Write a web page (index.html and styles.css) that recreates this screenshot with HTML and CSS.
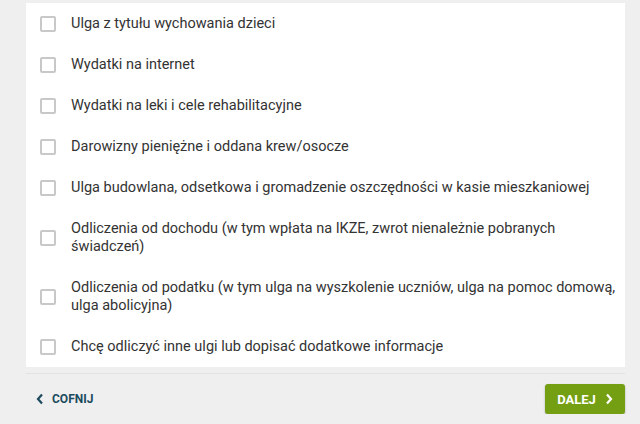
FILE: index.html
```html
<!DOCTYPE html>
<html lang="pl">
<head>
  <meta charset="UTF-8" />
  <meta name="viewport" content="width=device-width, initial-scale=1.0"/>
  <title>Ulgi i odliczenia</title>
  <link rel="stylesheet" href="styles.css">
</head>
<body>
  <div class="panel">
    <label class="option"><span class="box"></span><span class="text">Ulga z tytułu wychowania dzieci</span></label>
    <label class="option"><span class="box"></span><span class="text">Wydatki na internet</span></label>
    <label class="option"><span class="box"></span><span class="text">Wydatki na leki i cele rehabilitacyjne</span></label>
    <label class="option"><span class="box"></span><span class="text">Darowizny pieniężne i oddana krew/osocze</span></label>
    <label class="option"><span class="box"></span><span class="text">Ulga budowlana, odsetkowa i gromadzenie oszczędności w kasie mieszkaniowej</span></label>
    <label class="option"><span class="box"></span><span class="text">Odliczenia od dochodu (w tym wpłata na IKZE, zwrot nienależnie pobranych świadczeń)</span></label>
    <label class="option"><span class="box"></span><span class="text">Odliczenia od podatku (w tym ulga na wyszkolenie uczniów, ulga na pomoc domową, ulga abolicyjna)</span></label>
    <label class="option"><span class="box"></span><span class="text">Chcę odliczyć inne ulgi lub dopisać dodatkowe informacje</span></label>
  </div>

  <div class="nav">
    <a class="back" href="#">
      <svg width="8" height="12" viewBox="0 0 8 12"><path d="M6 1.5 L2 6 L6 10.5" fill="none" stroke="currentColor" stroke-width="2.2"/></svg>
      COFNIJ
    </a>
    <button class="next">
      DALEJ
      <svg width="8" height="12" viewBox="0 0 8 12"><path d="M2 1.5 L6 6 L2 10.5" fill="none" stroke="currentColor" stroke-width="2.2"/></svg>
    </button>
  </div>
</body>
</html>
```

FILE: styles.css
```css
body {
  background-color: #efefef;
  color: #333;
  font-family: Roboto, 'Liberation Sans', sans-serif;
  margin: 0;
  padding: 3px 15px 0 26px;
}
.panel {
  background-color: #fff;
  padding: 0 6px 0 14px;
}
.option {
  display: flex;
  align-items: center;
  gap: 15px;
  padding: 11.5px 0;
  font-size: 14.5px;
  line-height: 18px;
  cursor: pointer;
}
.box {
  flex: none;
  width: 12px;
  height: 12px;
  border: 2px solid #c8c8c8;
  border-radius: 2px;
  background: #fff;
}
.nav {
  margin-top: 6px;
  border-top: 1px solid #e2e2e2;
  padding: 10px 0 0 10px;
  display: flex;
  justify-content: space-between;
  align-items: center;
}
.back {
  display: flex;
  align-items: center;
  gap: 8px;
  color: #1d4b5e;
  font-size: 12px;
  font-weight: bold;
  text-decoration: none;
}
.next {
  display: flex;
  align-items: center;
  gap: 9px;
  height: 30px;
  width: 80px;
  justify-content: center;
  background-color: #759f13;
  color: #fff;
  border: none;
  border-radius: 3px;
  box-shadow: 0 1px 2px rgba(0,0,0,0.3);
  font-family: Roboto, 'Liberation Sans', sans-serif;
  font-size: 13px;
  font-weight: bold;
  cursor: pointer;
}
```
